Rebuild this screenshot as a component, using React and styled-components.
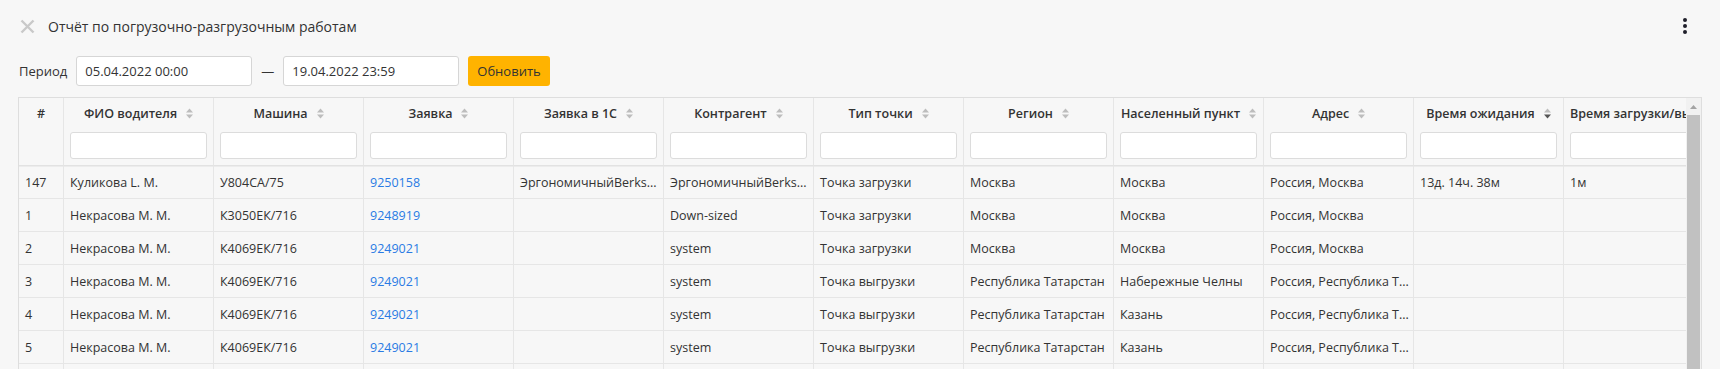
import React from "react";
import styled, { createGlobalStyle } from "styled-components";

const GlobalStyle = createGlobalStyle`
  html, body {
    margin: 0;
    padding: 0;
    background: #f7f7f7;
    overflow: hidden;
  }
  body {
    font-family: "Open Sans", "Noto Sans", sans-serif;
    color: #333;
  }
  * {
    box-sizing: border-box;
  }
`;

const Page = styled.div`
  height: 100vh;
  padding: 0 18px;
  display: flex;
  flex-direction: column;
  overflow: hidden;
`;

const TitleBar = styled.div`
  height: 52px;
  flex-shrink: 0;
  display: flex;
  align-items: center;
`;

const CloseButton = styled.button`
  width: 17px;
  height: 17px;
  margin-left: 1px;
  padding: 0;
  border: none;
  background: none;
  display: flex;
  align-items: center;
  justify-content: center;
  cursor: pointer;
`;

const Title = styled.h1`
  margin: 0 0 0 12px;
  font-size: 14px;
  font-weight: 400;
  color: #333;
  flex: 1;
`;

const MenuButton = styled.button`
  width: 10px;
  height: 16px;
  margin-right: 12px;
  padding: 0;
  border: none;
  background: none;
  display: flex;
  flex-direction: column;
  align-items: center;
  justify-content: space-between;
  cursor: pointer;

  span {
    width: 4px;
    height: 4px;
    border-radius: 50%;
    background: #1f1f2a;
  }
`;

const PeriodRow = styled.div`
  margin-top: 4px;
  height: 30px;
  flex-shrink: 0;
  display: flex;
  align-items: center;
`;

const PeriodLabel = styled.span`
  font-size: 13px;
  margin-left: 1px;
  margin-right: 9px;
`;

const DateInput = styled.input`
  width: 176px;
  height: 30px;
  padding: 0 8px;
  border: 1px solid #d6d6d6;
  border-radius: 3px;
  background: #fff;
  font-family: inherit;
  font-size: 13px;
  color: #333;
  outline: none;
`;

const Dash = styled.span`
  width: 31px;
  text-align: center;
  font-size: 13px;
`;

const RefreshButton = styled.button`
  height: 30px;
  margin-left: 9px;
  padding: 0 9px;
  border: none;
  border-radius: 3px;
  background: #ffb300;
  font-family: inherit;
  font-size: 13px;
  color: #333;
  cursor: pointer;
`;

const TableFrame = styled.div`
  margin-top: 11px;
  height: 300px;
  flex-shrink: 0;
  display: flex;
  border: 1px solid #dedede;
`;

const Viewport = styled.div`
  flex: 1;
  min-width: 0;
  overflow: hidden;
`;

const ScrollTrack = styled.div`
  width: 15px;
  display: flex;
  flex-direction: column;
  align-items: center;
  background: #f1f1f1;
`;

const ScrollArrow = styled.div`
  height: 17px;
  display: flex;
  align-items: center;
  justify-content: center;
`;

const ScrollThumb = styled.div`
  flex: 1;
  width: 13px;
  background: #c1c1c1;
`;

const Table = styled.table`
  table-layout: fixed;
  border-collapse: separate;
  border-spacing: 0;
  width: ${p => p.$width}px;
  font-size: 12.5px;
`;

const HeadCell = styled.th`
  padding: 5px 6px 6px;
  height: 68px;
  vertical-align: top;
  border-right: 1px solid #e6e6e6;
  border-bottom: 1px solid #e2e2e2;
  box-shadow: 0 1px 0 #ececec;
  font-weight: 600;
  color: #333;
  text-align: center;
  white-space: nowrap;
  overflow: hidden;
`;

const HeadTitle = styled.div`
  height: 20px;
  display: flex;
  align-items: center;
  justify-content: ${p => (p.$left ? "flex-start" : "center")};
  gap: 9px;
  margin-bottom: 9px;
`;

const FilterInput = styled.input`
  display: block;
  width: 100%;
  height: 27px;
  border: 1px solid #dcdcdc;
  border-radius: 3px;
  background: #fff;
  outline: none;
`;

const Cell = styled.td`
  height: 33px;
  padding: 0 2px 0 6px;
  border-right: 1px solid #e6e6e6;
  border-bottom: 1px solid #e6e6e6;
  white-space: nowrap;
  overflow: hidden;
  text-overflow: ellipsis;
  color: ${p => (p.$link ? "#2a7be4" : "#333")};
`;

const SortIcon = ({ active }) => (
  <svg width="7" height="11" viewBox="0 0 7 11">
    <path d="M0 4.5 L3.5 0.5 L7 4.5 Z" fill="#bdbdbd" />
    <path d="M0 6.5 L3.5 10.5 L7 6.5 Z" fill={active ? "#555" : "#bdbdbd"} />
  </svg>
);

const columns = [
  { key: "n", title: "#", width: 45, noFilter: true, noSort: true },
  { key: "driver", title: "ФИО водителя", width: 150 },
  { key: "car", title: "Машина", width: 150 },
  { key: "order", title: "Заявка", width: 150, link: true },
  { key: "order1c", title: "Заявка в 1С", width: 150 },
  { key: "agent", title: "Контрагент", width: 150 },
  { key: "type", title: "Тип точки", width: 150 },
  { key: "region", title: "Регион", width: 150 },
  { key: "city", title: "Населенный пункт", width: 150 },
  { key: "address", title: "Адрес", width: 150 },
  { key: "wait", title: "Время ожидания", width: 150, sorted: true },
  { key: "load", title: "Время загрузки/выгрузки", width: 150, noSort: true, left: true }
];

const rows = [
  {
    n: "147",
    driver: "Куликова L. M.",
    car: "У804СА/75",
    order: "9250158",
    order1c: "ЭргономичныйBerks...",
    agent: "ЭргономичныйBerks...",
    type: "Точка загрузки",
    region: "Москва",
    city: "Москва",
    address: "Россия, Москва",
    wait: "13д. 14ч. 38м",
    load: "1м"
  },
  {
    n: "1",
    driver: "Некрасова М. М.",
    car: "К3050ЕК/716",
    order: "9248919",
    agent: "Down-sized",
    type: "Точка загрузки",
    region: "Москва",
    city: "Москва",
    address: "Россия, Москва"
  },
  {
    n: "2",
    driver: "Некрасова М. М.",
    car: "К4069ЕК/716",
    order: "9249021",
    agent: "system",
    type: "Точка загрузки",
    region: "Москва",
    city: "Москва",
    address: "Россия, Москва"
  },
  {
    n: "3",
    driver: "Некрасова М. М.",
    car: "К4069ЕК/716",
    order: "9249021",
    agent: "system",
    type: "Точка выгрузки",
    region: "Республика Татарстан",
    city: "Набережные Челны",
    address: "Россия, Республика Т..."
  },
  {
    n: "4",
    driver: "Некрасова М. М.",
    car: "К4069ЕК/716",
    order: "9249021",
    agent: "system",
    type: "Точка выгрузки",
    region: "Республика Татарстан",
    city: "Казань",
    address: "Россия, Республика Т..."
  },
  {
    n: "5",
    driver: "Некрасова М. М.",
    car: "К4069ЕК/716",
    order: "9249021",
    agent: "system",
    type: "Точка выгрузки",
    region: "Республика Татарстан",
    city: "Казань",
    address: "Россия, Республика Т..."
  },
  // next row only peeks in at the bottom edge
  {}
];

const tableWidth = columns.reduce((sum, c) => sum + c.width, 0);

export default function App() {
  return (
    <>
      <GlobalStyle />
      <Page>
        <TitleBar>
          <CloseButton aria-label="Закрыть">
            <svg width="15" height="15" viewBox="0 0 15 15">
              <path
                d="M1.5 1.5 L13.5 13.5 M13.5 1.5 L1.5 13.5"
                stroke="#c9c9c9"
                strokeWidth="2.4"
              />
            </svg>
          </CloseButton>
          <Title>Отчёт по погрузочно-разгрузочным работам</Title>
          <MenuButton aria-label="Меню">
            <span />
            <span />
            <span />
          </MenuButton>
        </TitleBar>

        <PeriodRow>
          <PeriodLabel>Период</PeriodLabel>
          <DateInput defaultValue="05.04.2022 00:00" />
          <Dash>—</Dash>
          <DateInput defaultValue="19.04.2022 23:59" />
          <RefreshButton>Обновить</RefreshButton>
        </PeriodRow>

        <TableFrame>
          <Viewport>
            <Table $width={tableWidth}>
              <colgroup>
                {columns.map(c => (
                  <col key={c.key} style={{ width: c.width }} />
                ))}
              </colgroup>
              <thead>
                <tr>
                  {columns.map(c => (
                    <HeadCell key={c.key}>
                      <HeadTitle $left={c.left}>
                        <span>{c.title}</span>
                        {!c.noSort && <SortIcon active={c.sorted} />}
                      </HeadTitle>
                      {!c.noFilter && <FilterInput />}
                    </HeadCell>
                  ))}
                </tr>
              </thead>
              <tbody>
                {rows.map((r, i) => (
                  <tr key={i}>
                    {columns.map(c => (
                      <Cell key={c.key} $link={c.link}>
                        {r[c.key] || ""}
                      </Cell>
                    ))}
                  </tr>
                ))}
              </tbody>
            </Table>
          </Viewport>
          <ScrollTrack>
            <ScrollArrow>
              <svg width="7" height="4" viewBox="0 0 7 4">
                <path d="M0 4 L3.5 0 L7 4 Z" fill="#a3a3a3" />
              </svg>
            </ScrollArrow>
            <ScrollThumb />
          </ScrollTrack>
        </TableFrame>
      </Page>
    </>
  );
}
